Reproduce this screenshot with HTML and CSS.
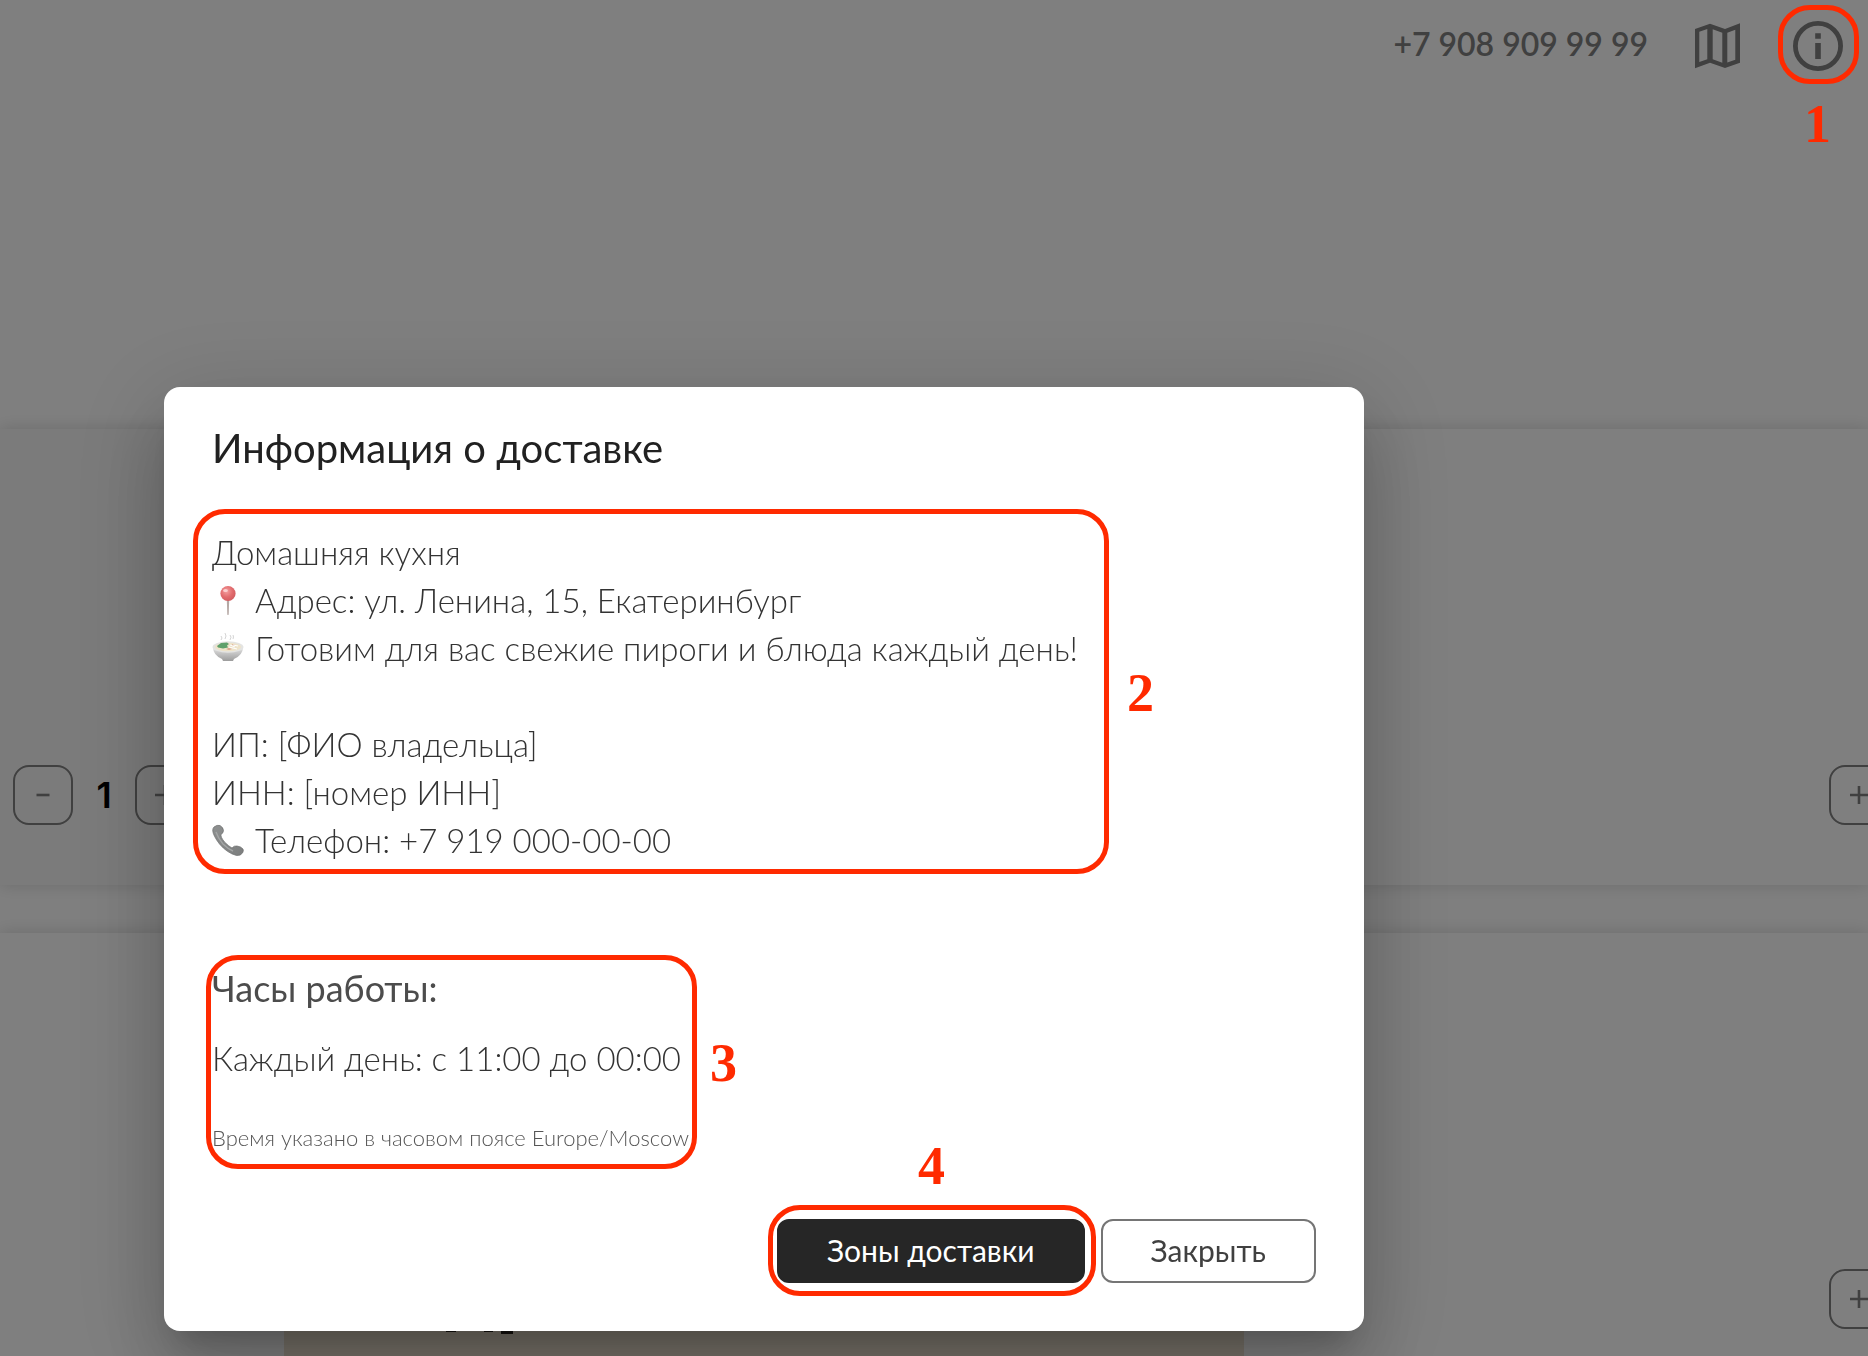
FILE: index.html
```html
<!DOCTYPE html>
<html lang="ru">
<head>
<meta charset="utf-8">
<meta name="viewport" content="width=device-width, initial-scale=1">
<title>Информация о доставке</title>
<link rel="stylesheet" href="styles.css">
</head>
<body>
<div class="page">
  <header class="header">
    <a class="phone" href="tel:+79089099999">+7 908 909 99 99</a>
    <button class="icon-button" type="button" aria-label="Карта">
      <svg viewBox="0 0 60 60"><path fill-rule="evenodd" d="M7 13L22 7.7L37 13L52 7.3V46.7L37 52L22 46.7L7 52.3ZM11.3 15.7V46L19.3 43.2V13ZM24.7 13.3V43.2L34.3 46.7V16.7ZM39.3 16.7V46.5L47.3 43.7V13.7Z"/></svg>
    </button>
    <button class="icon-button" type="button" aria-label="Информация">
      <svg viewBox="0 0 60 60"><circle cx="30" cy="30" r="22.6" fill="none" stroke="currentColor" stroke-width="4.8"/><path d="M27.2 17.3h5.6v5.4h-5.6zM27.2 27h5.6v16h-5.6z"/></svg>
    </button>
  </header>
  <main class="menu">
    <div class="row">
      <section class="card card-selected">
        <div class="stepper">
          <button class="step" type="button" aria-label="Убавить"><svg viewBox="0 0 20 20"><path d="M3.5 10h13"/></svg></button>
          <span class="count">1</span>
          <button class="step" type="button" aria-label="Добавить"><svg viewBox="0 0 20 20"><path d="M0 10h20M10 0v20"/></svg></button>
        </div>
      </section>
      <section class="card card-end">
        <button class="step" type="button" aria-label="Добавить"><svg viewBox="0 0 20 20"><path d="M1 10h18M10 1v18"/></svg></button>
      </section>
    </div>
    <section class="card card-end card-photo">
      <svg class="photo" viewBox="0 0 960 60" aria-hidden="true"><path fill="#efe4d2" d="M0 0h960v60H0z"/><path fill="#28201c" d="M162 0h10v31h-10zM200 0h9v31h-9zM217 0h12v33h-12z"/></svg>
      <button class="step" type="button" aria-label="Добавить"><svg viewBox="0 0 20 20"><path d="M1 10h18M10 1v18"/></svg></button>
    </section>
  </main>
</div>

<div class="backdrop">
  <div class="dialog" role="dialog" aria-labelledby="dialog-title">
    <h1 class="title" id="dialog-title">Информация о доставке</h1>
    <div class="about">
      <p>Домашняя кухня</p>
      <p><svg class="emoji" viewBox="0 0 34 32" aria-hidden="true">
        <defs>
          <radialGradient id="pin" cx=".4" cy=".35" r=".65"><stop offset="0" stop-color="#f4a0a0"/><stop offset=".6" stop-color="#e26c6e"/><stop offset="1" stop-color="#d25c60"/></radialGradient>
          <linearGradient id="bowl" x2="0" y2="1"><stop offset="0" stop-color="#e6e6e6"/><stop offset="1" stop-color="#9c9c9c"/></linearGradient>
          <linearGradient id="handset" x2="1" y2="1"><stop offset="0" stop-color="#8e9090"/><stop offset="1" stop-color="#7c7e7e"/></linearGradient>
        </defs>
        <path fill="#b5a8a4" d="M14.8 16h2.4l-.5 14.5q-.7 1-1.4 0z"/><circle cx="16" cy="9.5" r="7.6" fill="url(#pin)"/><ellipse cx="13.5" cy="6.5" rx="2.4" ry="1.6" fill="#fbd0d0"/></svg> Адрес: ул. Ленина, 15, Екатеринбург</p>
      <p><svg class="emoji" viewBox="0 0 34 32" aria-hidden="true"><path fill="none" stroke="#d4d4d4" d="M9 8q2-2 0-4M13 7q2-3 0-6M18 8q2-3 0-5M21 7q1-2 0-4"/><path fill="url(#bowl)" d="M1 15h30q0 8-9 12l-1 2H11l-1-2Q1 23 1 15z"/><ellipse cx="16" cy="15" rx="15.5" ry="5.8" fill="#e4e4e2"/><ellipse cx="16" cy="15" rx="13" ry="4.2" fill="#eee3c9"/><path fill="#5ea06b" d="M5 14l4-3 6-.5 2 1.500-2 1.500 1 2-5 1-5-1z"/><path fill="#d9a08a" d="M14 17l3-1 3 1-3 1zM20 12l3 1-2 1z"/><path fill="none" stroke="#fff" d="M18 13l5 2M17 15l8 2M21 13l5 1"/></svg> Готовим для вас свежие пироги и блюда каждый день!</p>
      <p><br></p>
      <p>ИП: [ФИО владельца]</p>
      <p>ИНН: [номер ИНН]</p>
      <p><svg class="emoji" viewBox="0 0 34 32" aria-hidden="true"><path fill="url(#handset)" stroke="#6d6f6f" stroke-width=".7" d="M2 3Q5 .5 8 1.5Q11 3 11.5 6.5Q11.5 9 9 10.5Q8.500 13 12.500 18Q17 22.500 20 24Q22 21.500 25 22Q29 22.500 31 25Q32 26.500 30.500 29Q28.500 32 24.500 31.500Q15 29 7.500 20Q1 11.500 .7 6.500Q.8 4 2 3z"/><path fill="none" stroke="#a4a6a6" stroke-width="1.400" d="M4 8q2 6 7 12 5 5 10 7"/></svg> Телефон: +7 919 000-00-00</p>
      <span class="ring"></span>
      <span class="mark">2</span>
    </div>
    <div class="hours">
      <h2 class="subtitle">Часы работы:</h2>
      <p class="time">Каждый день: с 11:00 до 00:00</p>
      <p class="note">Время указано в часовом поясе Europe/Moscow</p>
      <span class="ring"></span>
      <span class="mark">3</span>
    </div>
    <div class="actions">
      <div class="primary">
        <button class="button button-dark" type="button">Зоны доставки</button>
        <span class="ring"></span>
        <span class="mark">4</span>
      </div>
      <button class="button" type="button">Закрыть</button>
    </div>
  </div>
  <span class="ring ring-info"></span>
  <span class="mark mark-info">1</span>
</div>
</body>
</html>
```
FILE: styles.css
```css
* {
  box-sizing: border-box;
}

body {
  margin: 0;
  font-family: Lato, "Open Sans", sans-serif;
  background: #fff;
}

p, h1, h2 {
  margin: 0;
}

h1, h2 {
  font-weight: 400;
}

button {
  font: inherit;
  color: inherit;
}

/* Page under the dialog */
.page {
  height: 100vh;
  overflow: hidden;
  color: #808080;
}

.header {
  display: flex;
  justify-content: flex-end;
  align-items: center;
  gap: 40px;
  padding: 16px 20px 0 0;
}

.phone {
  padding-bottom: 6px;
  font-size: 32px;
  font-weight: 600;
  color: inherit;
  text-decoration: none;
}

.icon-button {
  width: 60px;
  height: 60px;
  padding: 0;
  border: 0;
  background: none;
}

.icon-button svg {
  display: block;
  fill: currentColor;
}

.menu {
  display: flex;
  flex-direction: column;
  gap: 48px;
  margin-top: 353px;
}

.row {
  display: grid;
  grid-template-columns: 1fr 1fr;
  gap: 48px;
}

.card {
  display: flex;
  align-items: flex-end;
  height: 456px;
  padding: 0 13px 60px;
  background: #fff;
  box-shadow: 0 0 16px rgba(0, 0, 0, 0.16);
}

.card-selected {
  background: #f6f6f6;
}

.card-end {
  justify-content: flex-end;
  padding-right: 0;
}

.card-end .step {
  margin-right: -21px;
}

.card-photo {
  padding-left: 284px;
}

.photo {
  width: 960px;
  height: 60px;
  margin: 0 auto -32px 0;
}

.stepper {
  display: flex;
  align-items: center;
}

.count {
  width: 62px;
  font: 600 36px/60px Inter, sans-serif;
  color: #000;
  text-align: center;
}

.step {
  display: grid;
  flex: none;
  place-items: center;
  width: 60px;
  height: 60px;
  padding: 0;
  border: 2px solid #808080;
  border-radius: 16px;
  background: none;
}

.step svg {
  width: 20px;
  height: 20px;
  stroke: currentColor;
  stroke-width: 2.6;
}

/* Dialog */
.backdrop {
  position: fixed;
  inset: 0;
  padding: 387px 0 0 164px;
  overflow: hidden;
  background: rgba(0, 0, 0, 0.5);
}

.dialog {
  max-width: 1200px;
  padding: 29px 48px 48px;
  border-radius: 16px;
  background: #fff;
  color: #4c4c4c;
  box-shadow: 0 22px 30px -14px rgba(0, 0, 0, 0.2), 0 48px 76px 6px rgba(0, 0, 0, 0.14), 0 18px 92px 16px rgba(0, 0, 0, 0.12);
}

.title {
  font-size: 40px;
  line-height: 64px;
  color: #212121;
}

.about,
.hours {
  position: relative;
}

.about {
  margin-top: 48px;
  font-size: 33px;
  font-weight: 300;
  line-height: 48px;
  color: #333;
}

.emoji {
  width: 34px;
  height: 32px;
  vertical-align: -3px;
}

.hours {
  margin-top: 100px;
}

.subtitle {
  font-size: 36px;
  line-height: 48px;
}

.time {
  margin-top: 22px;
  font-size: 33px;
  font-weight: 300;
  line-height: 48px;
  color: #333;
}

.note {
  margin-top: 40px;
  font-size: 22px;
  font-weight: 300;
  line-height: 32px;
  color: #555;
}

.actions {
  display: flex;
  justify-content: flex-end;
  gap: 16px;
  margin-top: 65px;
}

.primary {
  position: relative;
}

.button {
  height: 64px;
  padding: 0 48px 2px;
  border: 2px solid #757575;
  border-radius: 12px;
  background: #fff;
  font-size: 30px;
  color: #404040;
}

.button-dark {
  border-color: #262626;
  background: #262626;
  color: #fff;
}

/* Numbered call-outs */
.ring {
  position: absolute;
  border: 5px solid #ff2a00;
  border-radius: 32px;
  pointer-events: none;
}

.mark {
  position: absolute;
  font: 700 54px/54px "Liberation Serif", serif;
  color: #ff2a00;
}

.about .ring {
  inset: -19px 207px -10px -19px;
}

.about .mark {
  top: 138px;
  left: 915px;
}

.hours .ring {
  inset: -9px auto -15px -6px;
  width: 491px;
}

.hours .mark {
  top: 72px;
  left: 498px;
}

.primary .ring {
  inset: -14px -11px -13px -9px;
}

.primary .mark {
  top: -80px;
  left: 141px;
}

.ring-info {
  top: 5px;
  right: 9px;
  width: 81px;
  height: 79px;
}

.mark-info {
  top: 97px;
  right: 37px;
}
```
